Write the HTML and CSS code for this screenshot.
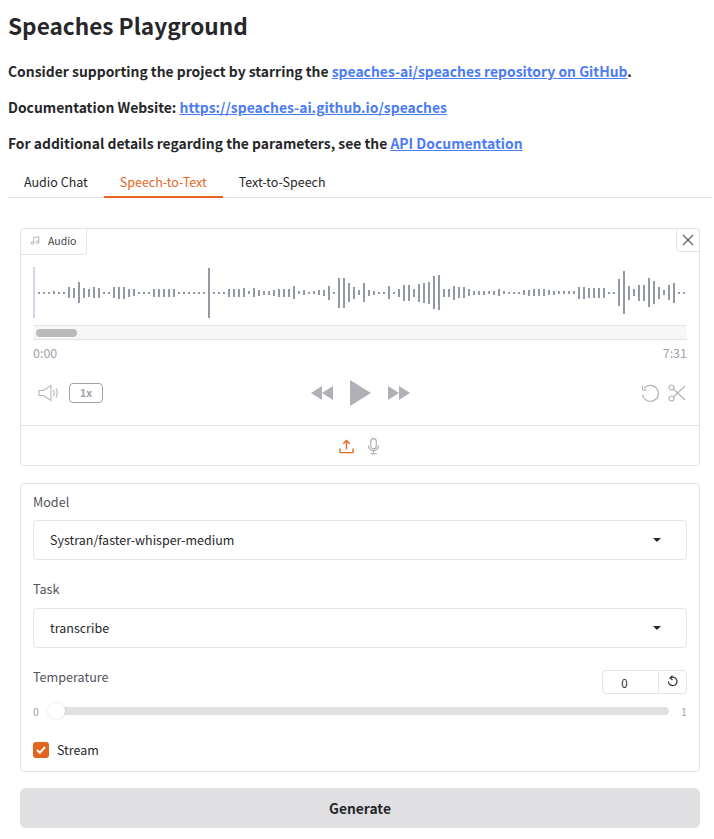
FILE: index.html
```html
<!DOCTYPE html>
<html lang="en">
<head>
  <meta charset="UTF-8">
  <meta name="viewport" content="width=device-width, initial-scale=1.0">
  <title>Speaches Playground</title>
  <link rel="stylesheet" href="styles.css">
</head>
<body>
  <h1>Speaches Playground</h1>
  <p class="note">Consider supporting the project by starring the <a href="#">speaches-ai/speaches repository on GitHub</a>.</p>
  <p class="note">Documentation Website: <a href="#">https://speaches-ai.github.io/speaches</a></p>
  <p class="note">For additional details regarding the parameters, see the <a href="#">API Documentation</a></p>

  <div class="tabs">
    <button class="tab">Audio Chat</button>
    <button class="tab active">Speech-to-Text</button>
    <button class="tab">Text-to-Speech</button>
  </div>

  <div class="card audio">
    <div class="audio-label">
      <svg width="10" height="11" viewBox="0 0 24 24" fill="none" stroke="#9a9aa3" stroke-width="1.8"><path d="M9 18V5l12-2v13"/><circle cx="6" cy="18" r="3"/><circle cx="18" cy="16" r="3"/></svg>
      <span>Audio</span>
    </div>
    <button class="close">
      <svg width="12" height="12" viewBox="0 0 12 12" fill="none" stroke="#5f6068" stroke-width="1.3"><path d="M1 1l10 10M11 1L1 11"/></svg>
    </button>

    <div class="player">
      <div class="wave" id="wave"></div>
      <div class="scroll"><div class="thumb"></div></div>
      <div class="times"><span>0:00</span><span>7:31</span></div>
      <div class="controls">
        <div class="ctl-left">
          <svg width="22" height="18" viewBox="0 0 22 18" fill="none" stroke="#b4b5bb" stroke-width="1.1"><path d="M1 6.500h4.500L13 1.500v15l-7.500-5H1z"/><path d="M15.500 6c.9 1.800.9 4.200 0 6M18 4.500c1.500 2.800 1.500 6.200 0 9"/></svg>
          <span class="speed">1x</span>
        </div>
        <div class="ctl-mid">
          <svg width="22" height="14" viewBox="0 0 22 14" fill="#b0b1b8"><path d="M0 7l11-7v14z"/><path d="M11 7l11-7v14z"/></svg>
          <svg width="21" height="26" viewBox="0 0 21 26" fill="#b0b1b8"><path d="M0 0l21 13L0 26z"/></svg>
          <svg width="22" height="14" viewBox="0 0 22 14" fill="#b0b1b8"><path d="M0 0l11 7-11 7z"/><path d="M11 0l11 7-11 7z"/></svg>
        </div>
        <div class="ctl-right">
          <svg width="20" height="20" viewBox="0 0 20 20" fill="none" stroke="#b4b5bb" stroke-width="1.2"><path d="M4 5.500a8 8 0 1 1-1.500 6"/><path d="M2.500 2.500v4.500H7"/></svg>
          <svg width="18" height="18" viewBox="0 0 18 18" fill="none" stroke="#b4b5bb" stroke-width="1.2"><circle cx="3.500" cy="3.500" r="2.500"/><circle cx="3.500" cy="14.500" r="2.500"/><path d="M5.500 5l11.500 11M5.500 13L17 2"/></svg>
        </div>
      </div>
    </div>

    <div class="sources">
      <svg width="15" height="15" viewBox="0 0 16 16" fill="none" stroke="#e2661f" stroke-width="1.5"><path d="M8 11V2M4.500 5L8 1.500 11.500 5"/><path d="M1 10v3.500a1 1 0 0 0 1 1h12a1 1 0 0 0 1-1V10"/></svg>
      <svg width="13" height="18" viewBox="0 0 14 18" fill="none" stroke="#a9aab1" stroke-width="1.2"><rect x="4" y="1" width="6" height="11" rx="3"/><path d="M1.500 8.500a5.500 5.500 0 0 0 11 0M7 14v3M3.500 17.300h7"/></svg>
    </div>
  </div>

  <div class="card form">
    <label class="label">Model</label>
    <div class="select"><span>Systran/faster-whisper-medium</span><i class="caret"></i></div>

    <label class="label task">Task</label>
    <div class="select"><span>transcribe</span><i class="caret"></i></div>

    <div class="temp-head">
      <label class="label">Temperature</label>
      <div class="number">
        <span class="number-val">0</span>
        <span class="number-reset">
          <svg width="11" height="12" viewBox="0 0 11 12" fill="none" stroke="#33343a" stroke-width="1.200"><path d="M3 3a4.300 4.300 0 1 1-1.600 3.500"/><path d="M5.500.6L3 3l2.500 2" /></svg>
        </span>
      </div>
    </div>
    <div class="slider">
      <span class="limit">0</span>
      <div class="track"><div class="knob"></div></div>
      <span class="limit">1</span>
    </div>

    <div class="check">
      <span class="box"><svg width="10" height="8" viewBox="0 0 10 8" fill="none" stroke="#fff" stroke-width="2"><path d="M1 4l2.800 2.800L9 1"/></svg></span>
      <span>Stream</span>
    </div>
  </div>

  <button class="generate">Generate</button>

  <script src="app.js"></script>
</body>
</html>
```
FILE: styles.css
```css
* {
  box-sizing: border-box;
}
body {
  font-family: "Noto Sans CJK SC", "Noto Sans", sans-serif;
  margin: 0;
  padding: 0 2px 0 8px;
  color: #27272a;
  background-color: #fff;
  height: 839px;
  overflow: hidden;
}
h1 {
  font-size: 22.600px;
  font-weight: 600;
  line-height: 30px;
  margin: 11px 0 20px;
}
.note {
  font-size: 13.900px;
  font-weight: 600;
  line-height: 20px;
  margin: 0 0 16px;
}
.note a {
  color: #4b7bf5;
}
.tabs {
  display: flex;
  border-bottom: 1px solid #e4e4e7;
  height: 30px;
  margin-top: -1px;
}
.tab {
  font: inherit;
  font-size: 12.500px;
  line-height: 20px;
  background: none;
  border: none;
  color: #27272a;
  padding: 0 16px 3px;
  height: 30px;
}
.tab.active {
  color: #e2661f;
  border-bottom: 2px solid #e2661f;
  padding-bottom: 1px;
}
.card {
  border: 1px solid #e4e4e7;
  border-radius: 4px;
  margin: 0 12px;
  position: relative;
}
.audio {
  margin-top: 30px;
  height: 238px;
}
.audio-label {
  display: flex;
  align-items: center;
  gap: 8px;
  width: 66px;
  height: 26px;
  padding: 0 0 2px 9px;
  font-size: 10.500px;
  color: #3f3f46;
  border-right: 1px solid #e4e4e7;
  border-bottom: 1px solid #e4e4e7;
  border-bottom-right-radius: 4px;
}
.close {
  position: absolute;
  top: -1px;
  right: -1px;
  width: 24px;
  height: 24px;
  padding: 0;
  display: flex;
  align-items: center;
  justify-content: center;
  background: #fff;
  border: 1px solid #e4e4e7;
  border-radius: 0 4px 0 4px;
}
.player {
  padding: 12px 12px 0;
}
.wave {
  display: flex;
  align-items: center;
  gap: 3px;
  height: 51px;
  border-left: 2px solid #d9d3e8;
  padding-left: 3px;
}
.bar {
  width: 2px;
  flex: none;
  background-color: #9499a6;
}
.scroll {
  height: 15px;
  margin-top: 7px;
  background-color: #f7f7f7;
  border-top: 1px solid #e4e4e7;
  border-bottom: 1px solid #e4e4e7;
  padding: 3px;
}
.thumb {
  width: 41px;
  height: 8px;
  border-radius: 4px;
  background-color: #bbb;
}
.times {
  display: flex;
  justify-content: space-between;
  font-size: 12.500px;
  line-height: 16px;
  color: #a1a1aa;
  margin-top: 5px;
}
.controls {
  display: grid;
  grid-template-columns: 1fr auto 1fr;
  align-items: center;
  height: 30px;
  margin-top: 17px;
}
.ctl-left {
  display: flex;
  align-items: center;
  gap: 9px;
  padding-left: 5px;
}
.speed {
  width: 34px;
  height: 20px;
  border: 1px solid #a1a1aa;
  border-radius: 4px;
  font-size: 10.500px;
  font-weight: 600;
  line-height: 18px;
  text-align: center;
  color: #a1a1aa;
}
.ctl-mid {
  display: flex;
  align-items: center;
  gap: 17px;
}
.ctl-right {
  display: flex;
  align-items: center;
  justify-content: flex-end;
  gap: 8px;
  padding-right: 1px;
}
.sources {
  display: flex;
  align-items: center;
  justify-content: center;
  gap: 13px;
  height: 41px;
  margin-top: 17px;
  padding-right: 2px;
  border-top: 1px solid #e4e4e7;
}
.form {
  margin-top: 17px;
  height: 289px;
  padding: 10px 12px 0;
}
.label {
  display: block;
  font-size: 12.600px;
  line-height: 16px;
  color: #52525b;
}
.select {
  display: flex;
  align-items: center;
  justify-content: space-between;
  height: 40px;
  margin-top: 10px;
  padding: 0 25px 2px 16px;
  font-size: 12.500px;
  border: 1px solid #e4e4e7;
  border-radius: 4px;
}
.task {
  margin-top: 21px;
  margin-bottom: 11px;
}
.caret {
  width: 0;
  height: 0;
  margin-top: 2px;
  border-left: 4.500px solid transparent;
  border-right: 4.500px solid transparent;
  border-top: 4.500px solid #27272a;
}
.temp-head {
  display: flex;
  justify-content: space-between;
  align-items: center;
  margin-top: 22px;
}
.temp-head .label {
  margin-top: -11px;
}
.number {
  display: flex;
  width: 85px;
  height: 24px;
  border: 1px solid #e4e4e7;
  border-radius: 4px;
  font-size: 11.500px;
  line-height: 24px;
}
.number-val {
  flex: 1;
  padding-right: 12px;
  text-align: center;
  border-right: 1px solid #e4e4e7;
}
.number-reset {
  width: 27px;
  display: flex;
  align-items: center;
  justify-content: center;
  padding-bottom: 3px;
}
.slider {
  display: flex;
  align-items: center;
  gap: 12px;
  height: 16px;
  margin-top: 9px;
}
.limit {
  font-size: 10.500px;
  color: #a1a1aa;
  width: 6px;
  text-align: center;
}
.track {
  flex: 1;
  height: 8px;
  border-radius: 4px;
  background-color: #e0e0e3;
  position: relative;
}
.knob {
  position: absolute;
  left: -3px;
  top: -4px;
  width: 17px;
  height: 16px;
  border-radius: 50%;
  background-color: #fff;
  box-shadow: 0 0 3px rgba(0, 0, 0, 0.15);
}
.check {
  display: flex;
  align-items: center;
  gap: 8px;
  font-size: 12.500px;
  margin-top: 23px;
  height: 16px;
}
.check span:last-child {
  padding-bottom: 2px;
}
.box {
  width: 16px;
  height: 16px;
  border-radius: 3px;
  background-color: #e2661f;
  display: flex;
  align-items: center;
  justify-content: center;
}
.generate {
  display: block;
  width: 680px;
  height: 40px;
  margin: 16px 12px 0;
  border: none;
  border-radius: 6px;
  background-color: #e0e0e3;
  color: #27272a;
  font: inherit;
  font-size: 13.800px;
  font-weight: 600;
}
```
FILE: app.js
```js
// bar heights of the waveform, left to right
var heights = [
  1, 1, 2, 3, 2, 1, 11, 10, 21, 10, 8, 11, 10, 2, 1, 11, 12, 12, 8, 7, 2, 1, 1, 8, 8, 8, 8, 8, 2, 2, 2, 2, 2, 2,
  50, 1, 1, 2, 8, 8, 8, 9, 3, 9, 6, 4, 4, 6, 8, 8, 8, 13, 3, 5, 2, 3, 5, 6, 14, 1, 30, 30, 19, 12,
  5, 19, 6, 4, 2, 2, 13, 2, 8, 16, 16, 8, 18, 20, 22, 33, 35, 8, 8, 14, 11, 11, 7, 4, 4, 4, 3, 4, 7, 3, 2, 2, 1,
  5, 6, 7, 7, 7, 5, 4, 3, 3, 3, 3, 12, 12, 10, 10, 10, 10, 1, 1, 27, 43, 14, 7, 16, 16, 29, 23, 12, 5, 15, 20, 2, 2
];

var wave = document.getElementById("wave");
for (var i = 0; i < heights.length; i++) {
  var bar = document.createElement("div");
  bar.className = "bar";
  bar.style.height = Math.max(heights[i], 2) + "px";
  wave.appendChild(bar);
}
```
